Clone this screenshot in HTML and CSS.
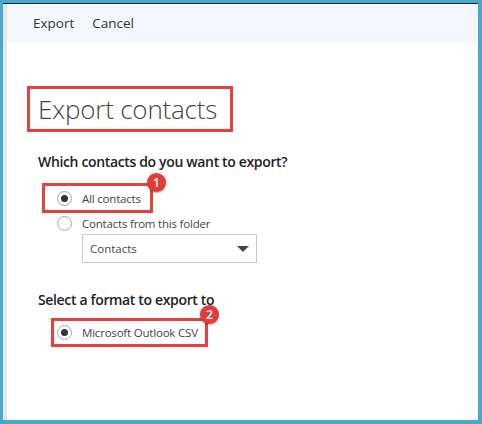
FILE: index.html
```html
<!DOCTYPE html>
<html>
<head>
<meta charset="utf-8">
<link rel="stylesheet" href="styles.css">
</head>
<body>
<div class="window">
  <div class="strip"></div>
  <div class="main">
    <div class="toolbar">
      <span class="tool">Export</span>
      <span class="tool">Cancel</span>
    </div>
    <div class="content">
      <div class="title-box"><h1 class="title">Export contacts</h1></div>
      <h2 class="question q1">Which contacts do you want to export?</h2>
      <div class="option hl hl-all">
        <span class="radio checked"></span><span class="label">All contacts</span>
        <span class="badge">1</span>
      </div>
      <div class="option opt-folder">
        <span class="radio"></span><span class="label">Contacts from this folder</span>
      </div>
      <div class="select">
        <span class="select-text">Contacts</span>
        <span class="caret"></span>
      </div>
      <h2 class="question q2">Select a format to export to</h2>
      <div class="option hl hl-csv">
        <span class="radio checked"></span><span class="label">Microsoft Outlook CSV</span>
        <span class="badge">2</span>
      </div>
    </div>
  </div>
</div>
</body>
</html>
```

FILE: styles.css
```css
* { box-sizing: border-box; }
html, body { margin: 0; padding: 0; }
body {
  width: 482px;
  height: 424px;
  background: #4aa9c7;
  font-family: "Open Sans", "Noto Sans", sans-serif;
}
.window {
  width: 482px;
  height: 424px;
  border-style: solid;
  border-color: #4aa9c7;
  border-width: 3px 4px 4px 3px;
  display: flex;
}
.strip {
  width: 4px;
  background: #e4e7ea;
  border-top: 1px solid #1d2a33;
}
.main {
  flex: 1;
  background: #fff;
  border-top: 1px solid #1d2a33;
  display: flex;
  flex-direction: column;
}
.toolbar {
  height: 39px;
  background: #f3f7fb;
  display: flex;
  align-items: center;
  gap: 18px;
  padding-left: 26px;
  padding-bottom: 2px;
}
.tool {
  font-size: 13.5px;
  color: #333;
}
.content {
  padding-left: 20px;
  display: flex;
  flex-direction: column;
  align-items: flex-start;
}
.title-box {
  margin-top: 43px;
  width: 206px;
  height: 46px;
  border: 3px solid #e8403d;
  padding-left: 8px;
  display: flex;
  align-items: center;
}
.title {
  margin: 0;
  font-weight: 300;
  font-size: 26px;
  color: #444;
  letter-spacing: -0.2px;
  white-space: nowrap;
}
.question {
  margin: 0;
  font-size: 14px;
  font-weight: 600;
  color: #222;
  padding-left: 11px;
  letter-spacing: -0.35px;
  white-space: nowrap;
}
.q1 { margin-top: 20px; }
.q2 { margin-top: 27px; }
.option {
  position: relative;
  display: flex;
  align-items: center;
  height: 23px;
  padding-left: 30px;
  white-space: nowrap;
}
.radio {
  flex: none;
  width: 15px;
  height: 15px;
  border: 1px solid #a6a6a6;
  border-radius: 50%;
  background: #fff;
  display: flex;
  align-items: center;
  justify-content: center;
  margin-right: 10px;
}
.radio.checked::after {
  content: "";
  width: 7px;
  height: 7px;
  border-radius: 50%;
  background: #333;
}
.label {
  font-size: 11.5px;
  color: #444;
  letter-spacing: -0.2px;
}
.hl {
  border: 3px solid #e8403d;
}
.hl-all {
  margin-top: 12px;
  margin-left: 15px;
  width: 111px;
  height: 30px;
  padding-left: 12px;
}
.opt-folder {
  margin-top: -1px;
  padding-left: 30px;
}
.select {
  margin-left: 55px;
  margin-top: -1px;
  width: 175px;
  height: 29px;
  border: 1px solid #c8c8c8;
  display: flex;
  align-items: center;
  justify-content: space-between;
  padding: 0 7px;
}
.select-text {
  font-size: 11.5px;
  color: #444;
}
.caret {
  width: 0;
  height: 0;
  border-left: 6px solid transparent;
  border-right: 6px solid transparent;
  border-top: 6px solid #444;
}
.hl-csv {
  margin-top: 9px;
  margin-left: 24px;
  width: 157px;
  height: 29px;
  padding-left: 3px;
}
.badge {
  position: absolute;
  width: 19px;
  height: 19px;
  border-radius: 50%;
  background: #e03c3a;
  color: #fff;
  font-size: 12px;
  font-weight: 600;
  display: flex;
  align-items: center;
  justify-content: center;
  box-shadow: 0 1px 2px rgba(0,0,0,0.35);
}
.hl-all .badge { right: -16px; top: -13px; }
.hl-csv .badge { right: -14px; top: -16px; }
```
